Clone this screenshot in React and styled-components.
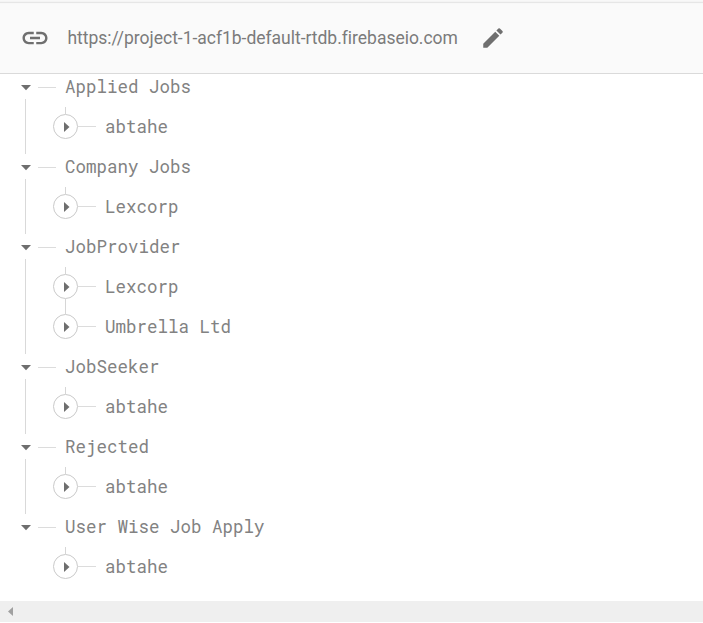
import React from "react";
import styled, { createGlobalStyle } from "styled-components";

const GlobalStyle = createGlobalStyle`
  * { box-sizing: border-box; }
  body { margin: 0; background: #fff; overflow: hidden; }
`;

const Panel = styled.main`
  width: 100%;
  height: 623px;
  display: flex;
  flex-direction: column;
  background: #fff;
`;

const TopEdge = styled.div`
  height: 4px;
  flex: none;
  background: linear-gradient(#f8f8f8 0 1px, #f4f4f4 1px 2px, #e6e6e6 2px 3px, #f8f8f8 3px);
`;

const UrlBar = styled.header`
  height: 70px;
  flex: none;
  display: flex;
  align-items: center;
  padding: 0 0 2px 20px;
  background: #fafafa;
  border-bottom: 1px solid #dadada;
`;

const Icon = styled.svg`
  width: ${(p) => p.$size}px;
  height: ${(p) => p.$size}px;
  flex: none;
  fill: #6f6f6f;
`;

const Url = styled.span`
  width: 391px;
  margin: 0 21.5px 0 17.5px;
  white-space: nowrap;
  font: 400 17.5px/24px Roboto, sans-serif;
  letter-spacing: -0.02px;
  color: #7b7b7b;
`;

const Tree = styled.div`
  flex: 1;
  min-height: 0;
  padding-left: 21px;
`;

const Group = styled.section`
  display: grid;
  grid-template-columns: 10px 1fr;
`;

const Rail = styled.div`
  display: flex;
  flex-direction: column;
`;

const Toggle = styled.div`
  height: 25px;
  padding-top: 11px;
`;

const Guide = styled.div`
  flex: 1;
  width: 1px;
  margin-left: 4px;
  background: #d9d9d9;
`;

const GroupBody = styled.div`
  padding-bottom: 15px;
`;

const GroupTitle = styled.div`
  height: 26px;
  margin-bottom: 7px;
  padding-left: 7px;
  display: flex;
  align-items: center;
`;

const Dash = styled.span`
  width: 18px;
  height: 1px;
  flex: none;
  background: #dcdcdc;
`;

const Label = styled.span`
  margin-left: 9px;
  white-space: pre;
  font: 400 17.5px/26px "Roboto Mono", "Liberation Mono", monospace;
  color: #828282;
`;

const Child = styled.div`
  padding-left: 22px;
`;

const Connector = styled.div`
  width: 1px;
  height: ${(p) => (p.$first ? 7 : 15)}px;
  margin-left: 12px;
  background: #d6d6d6;
`;

const ChildRow = styled.div`
  height: 25px;
  display: flex;
  align-items: center;
`;

const Expander = styled.span`
  width: 25px;
  height: 25px;
  flex: none;
  display: flex;
  align-items: center;
  padding-left: 10px;
  border: 1px solid #cacaca;
  border-radius: 50%;
`;

const Triangle = styled.svg`
  display: block;
  flex: none;
  fill: ${(p) => p.$color || "#6e6e6e"};
`;

const ScrollBar = styled.div`
  height: 21px;
  flex: none;
  margin-bottom: 1px;
  display: flex;
  align-items: center;
  padding-left: 8px;
  background: #efefef;
`;

const groups = [
  { name: "Applied Jobs", children: ["abtahe"] },
  { name: "Company Jobs", children: ["Lexcorp"] },
  { name: "JobProvider", children: ["Lexcorp", "Umbrella Ltd"] },
  { name: "JobSeeker", children: ["abtahe"] },
  { name: "Rejected", children: ["abtahe"] },
  { name: "User Wise Job Apply", children: ["abtahe"] },
];

function TreeGroup({ name, items, last }) {
  return (
    <Group>
      <Rail>
        <Toggle>
          <Triangle width="10" height="6" viewBox="0 0 10 6">
            <path d="M0 0h10L5 5.3z" />
          </Triangle>
        </Toggle>
        {!last && <Guide />}
      </Rail>
      <GroupBody>
        <GroupTitle>
          <Dash />
          <Label>{name}</Label>
        </GroupTitle>
        {items.map((item, i) => (
          <Child key={item}>
            <Connector $first={i === 0} />
            <ChildRow>
              <Expander>
                <Triangle width="6" height="10" viewBox="0 0 6 10">
                  <path d="M0 0l5.5 5L0 10z" />
                </Triangle>
              </Expander>
              <Dash />
              <Label>{item}</Label>
            </ChildRow>
          </Child>
        ))}
      </GroupBody>
    </Group>
  );
}

export default function App() {
  return (
    <Panel>
      <GlobalStyle />
      <TopEdge />
      <UrlBar>
        <Icon $size={30} viewBox="0 0 24 24">
          <path d="M3.9 12c0-1.71 1.39-3.1 3.1-3.1h4V7H7c-2.76 0-5 2.24-5 5s2.24 5 5 5h4v-1.9H7c-1.71 0-3.1-1.39-3.1-3.1zM8 13h8v-2H8v2zm9-6h-4v1.9h4c1.71 0 3.1 1.39 3.1 3.1s-1.39 3.1-3.1 3.1h-4V17h4c2.76 0 5-2.24 5-5s-2.24-5-5-5z" />
        </Icon>
        <Url>https://project-1-acf1b-default-rtdb.firebaseio.com</Url>
        <Icon $size={26} viewBox="0 0 24 24">
          <path d="M3 17.25V21h3.75L17.81 9.94l-3.75-3.75L3 17.25zM20.71 7.04a.996.996 0 0 0 0-1.41l-2.34-2.34a.996.996 0 0 0-1.41 0l-1.83 1.83 3.75 3.75 1.83-1.83z" />
        </Icon>
      </UrlBar>
      <Tree>
        {groups.map((g, i) => (
          <TreeGroup key={g.name} name={g.name} items={g.children} last={i === groups.length - 1} />
        ))}
      </Tree>
      <ScrollBar>
        <Triangle $color="#a0a0a0" width="5" height="9" viewBox="0 0 5 9">
          <path d="M5 0v9L0 4.5z" />
        </Triangle>
      </ScrollBar>
    </Panel>
  );
}
